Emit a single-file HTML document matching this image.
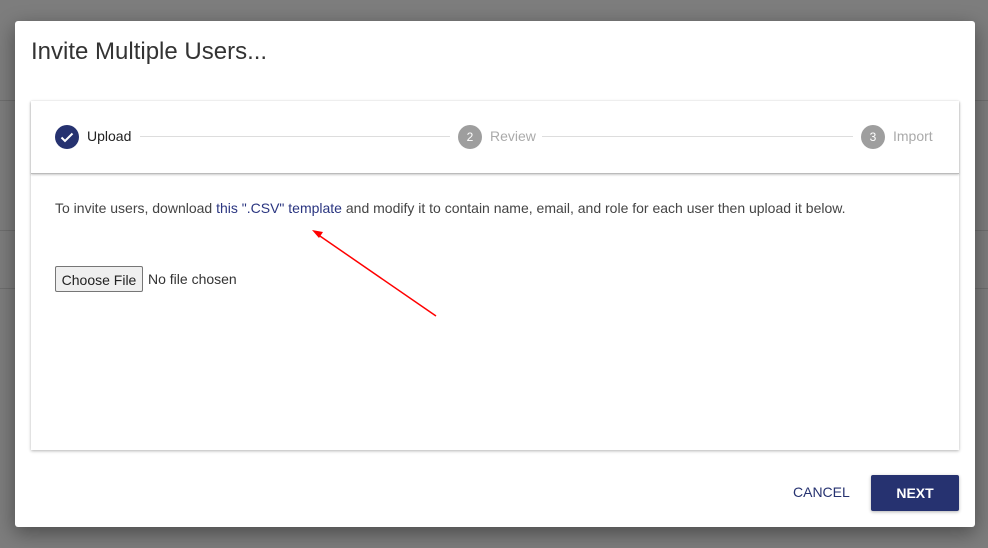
<!DOCTYPE html>
<html><head><style>
body{margin:0;width:988px;height:548px;background:#7d7d7d;font-family:"Liberation Sans",Arial,sans-serif;position:relative;overflow:hidden}
.bgl{position:absolute;left:0;right:0;height:1px;background:#6e6e6e}
.dlg{position:absolute;left:15px;top:21px;width:960px;height:506px;background:#fff;border-radius:3px;box-shadow:0 6px 20px rgba(0,0,0,.4)}
h1{position:absolute;left:16px;top:17px;margin:0;font-weight:normal;font-size:24px;color:#333}
.card{position:absolute;left:16px;top:80px;width:928px;height:349px;background:#fff;box-shadow:0 1px 3px rgba(0,0,0,.3)}
.head{height:72px;border-bottom:1px solid #bbb;box-shadow:0 1px 2px rgba(0,0,0,.2);position:relative}
.c{position:absolute;top:24px;width:24px;height:24px;border-radius:50%;color:#fff;font-size:12px;text-align:center;line-height:24px}
.lbl{position:absolute;top:27px;font-size:14px}
.ln{position:absolute;top:35px;height:1px;background:#ddd}
.txt{position:absolute;left:24px;top:99px;font-size:14px;color:#444}
.btnf{position:absolute;left:24px;top:165px;width:88px;height:26px;border:1px solid #767676;background:#efefef;border-radius:2px;font-size:14px;color:#222;text-align:center;line-height:26px;box-sizing:border-box}
</style></head><body>
<div class="bgl" style="top:100px"></div><div class="bgl" style="top:230px"></div><div class="bgl" style="top:288px"></div>
<div class="dlg">
<h1>Invite Multiple Users...</h1>
<div class="card">
<div class="head">
<div class="c" style="left:24px;background:#263270"><svg width="24" height="24" viewBox="0 0 24 24"><path d="M6.5 12.5l3.5 3.5 7.5-7.5" stroke="#fff" stroke-width="2" fill="none"/></svg></div>
<div class="lbl" style="left:56px;color:#222">Upload</div>
<div class="ln" style="left:109px;width:310px"></div>
<div class="c" style="left:427px;background:#9e9e9e">2</div>
<div class="lbl" style="left:459px;color:#aaa">Review</div>
<div class="ln" style="left:511px;width:311px"></div>
<div class="c" style="left:830px;background:#9e9e9e">3</div>
<div class="lbl" style="left:862px;color:#aaa">Import</div>
</div>
<div class="txt">To invite users, download <span style="color:#2a3580">this ".CSV" template</span> and modify it to contain name, email, and role for each user then upload it below.</div>
<div class="btnf">Choose File</div>
<div style="position:absolute;left:117px;top:170px;font-size:14px;color:#333">No file chosen</div>
</div>
<svg style="position:absolute;left:0;top:0" width="960" height="506"><line x1="421" y1="295" x2="302" y2="213" stroke="#f00" stroke-width="1.5"/><path d="M297 209l11 2-4 6z" fill="#f00"/></svg>
<div style="position:absolute;left:778px;top:463px;font-size:14px;color:#263270">CANCEL</div>
<div style="position:absolute;left:856px;top:454px;width:88px;height:36px;background:#263270;color:#fff;font-size:14px;font-weight:bold;text-align:center;line-height:36px;border-radius:2px;box-shadow:0 1px 3px rgba(0,0,0,.3)">NEXT</div>
</div>
</body></html>
